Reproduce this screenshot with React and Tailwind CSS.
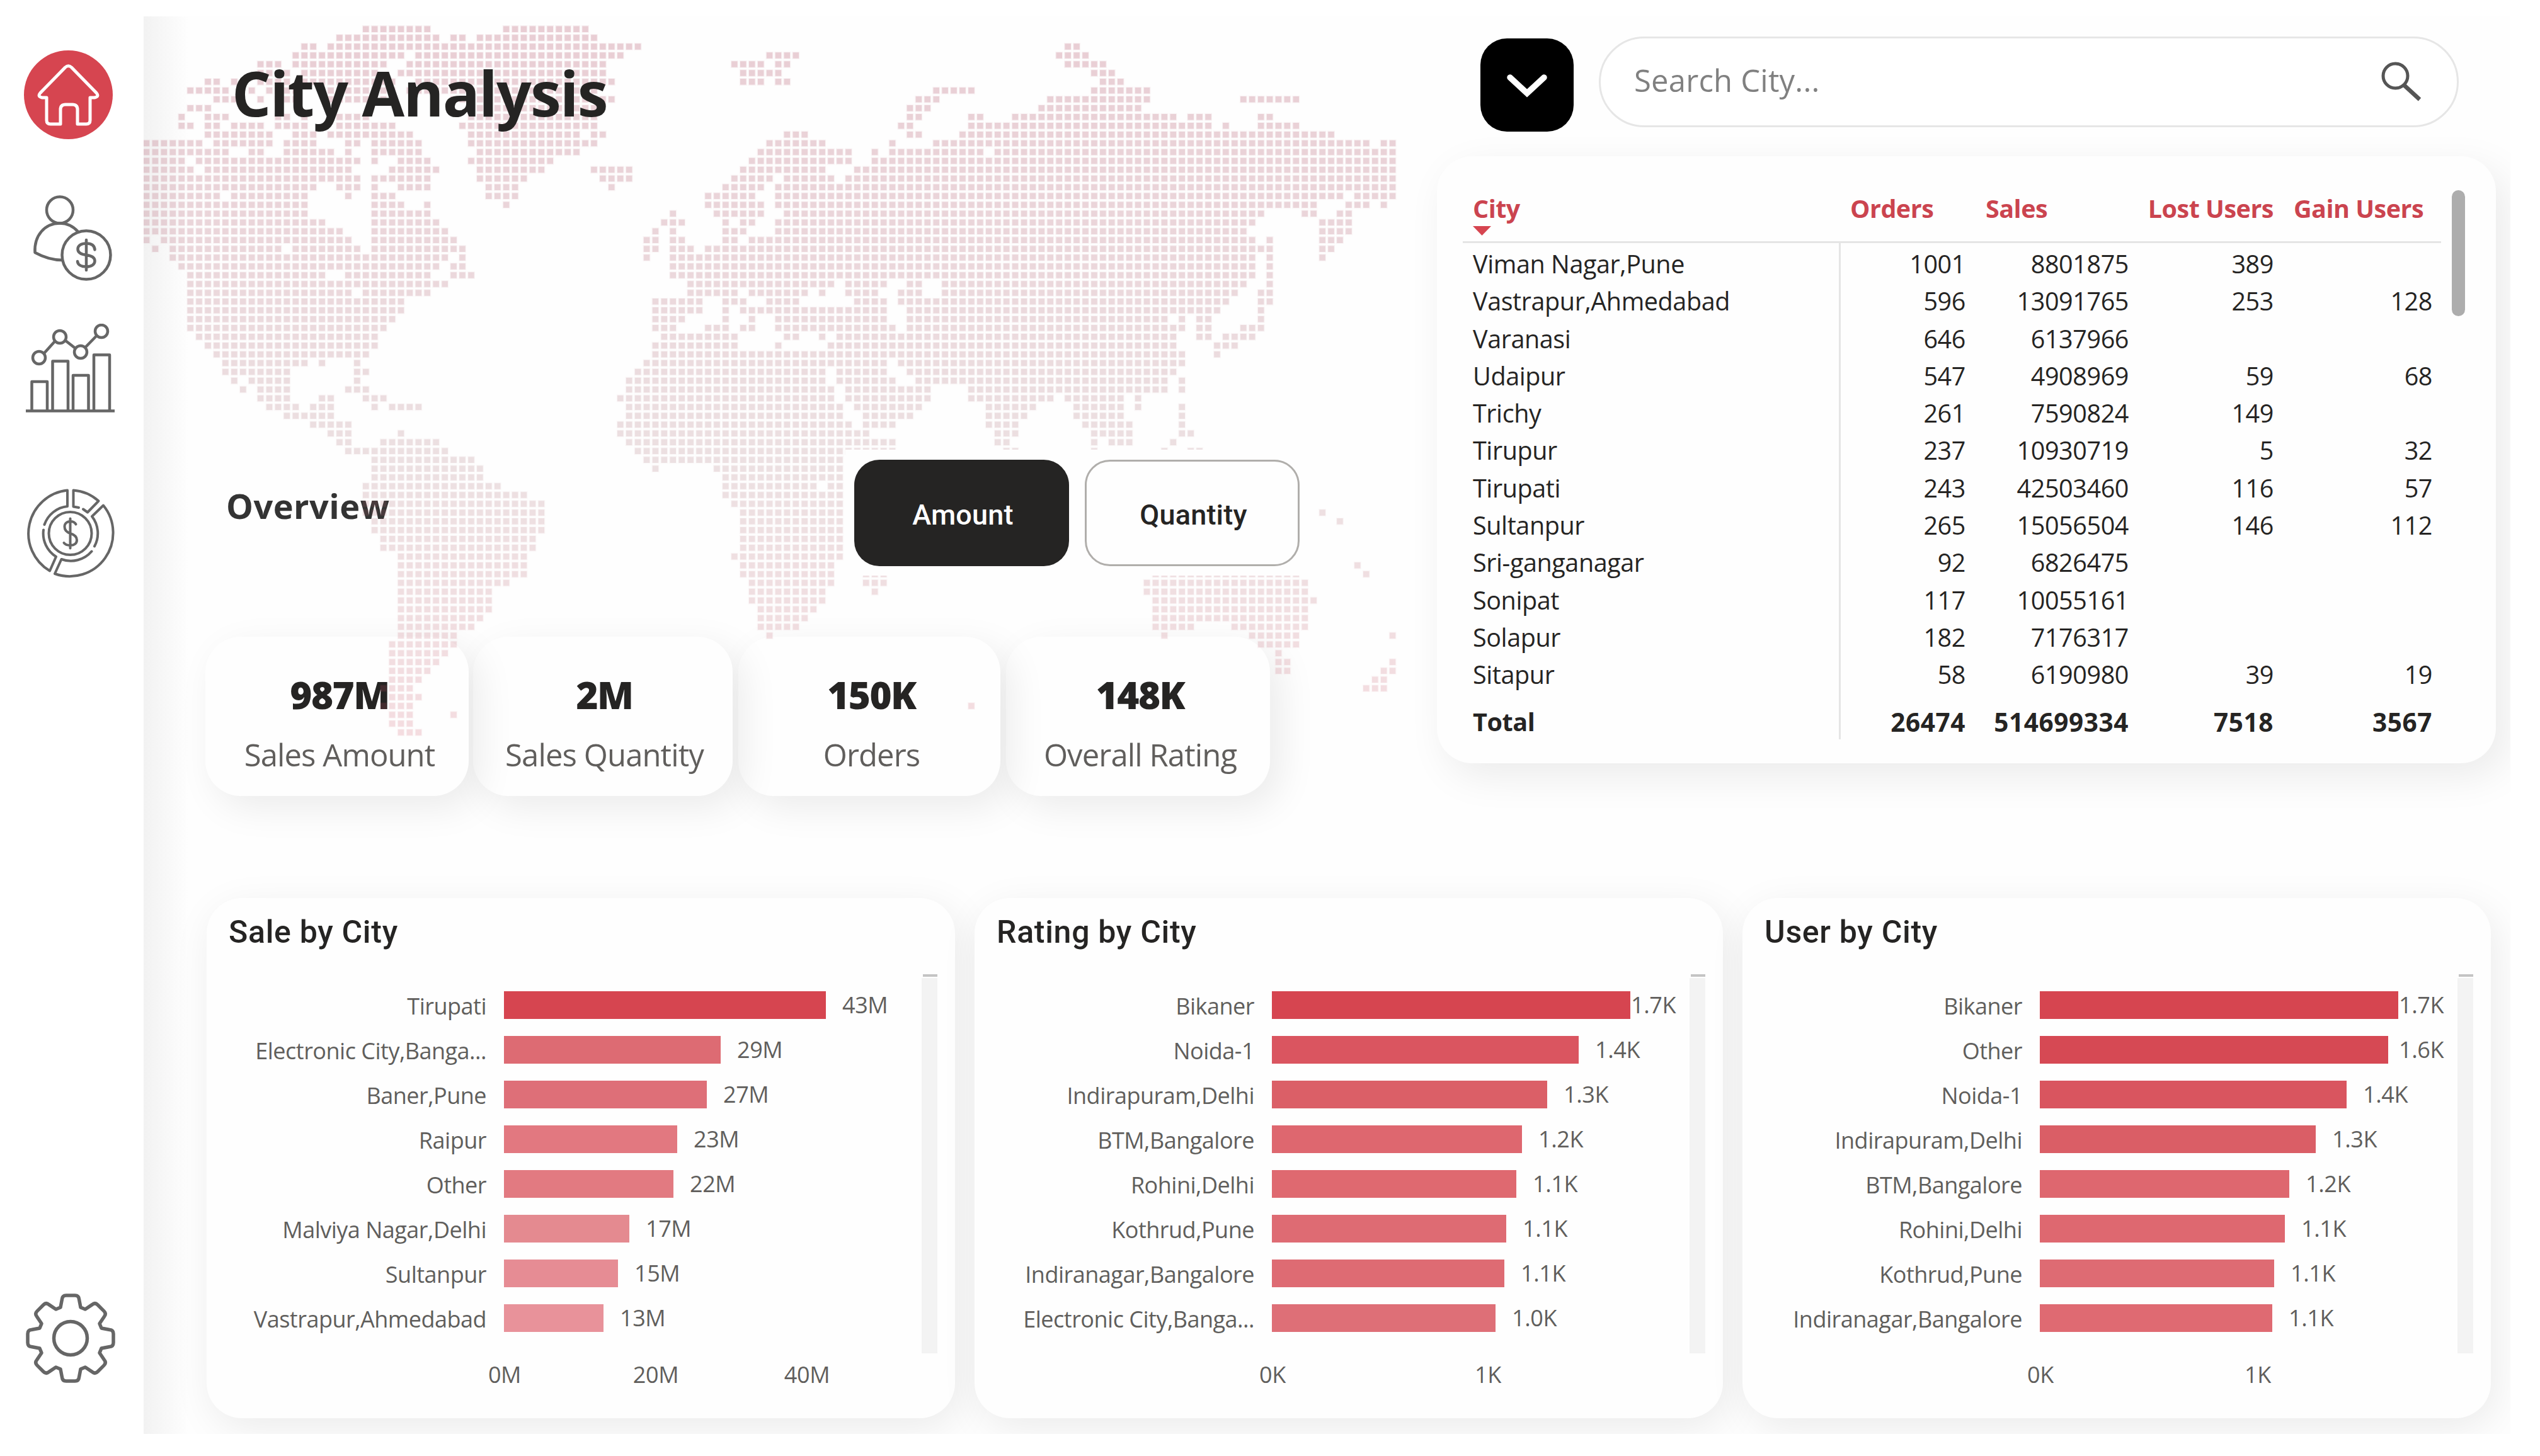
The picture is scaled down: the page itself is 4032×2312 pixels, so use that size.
import React from "react";

const SEGOE = "font-['Open_Sans','Noto_Sans',sans-serif]";

/* World map dots: one string per row, each a list of filled column ranges. */
const MAP_ROWS = [
  "25-32,41-50",
  "22-33,35-36,38-51",
  "18-19,21-56,105-106",
  "17-29,31-54,71-74,104-107",
  "13-15,17-27,30-52,67-70,72-73,105-109",
  "13-14,16,18-26,29-52,68-72,108-110",
  "7-8,10,13-16,18-28,31-53,68-70,72-73,109-111",
  "5-9,12,14-17,20-28,30-51,90-94,108-114",
  "8-10,13,15-17,21-28,35-53,88-90,103-114,125-131",
  "5-7,37-51,87-89,102-113",
  "4,7-9,15-16,18,22-25,37-51,87-88,94-95,99-117,119-121,127-128",
  "4-5,7-8,10-13,15-18,22-28,36-51,86-87,94-121,123,127-131",
  "7-14,17-19,21-30,37-49,51-52,73-75,87-88,93-135",
  "0-6,8-14,16-19,23-24,26-31,37-51,71-77,85,90-139,141-142",
  "0-9,12-13,16-21,23,26-31,38-49,70-80,83,85-95,97-142",
  "0-4,6-24,26,29-32,37-46,69-80,83-142",
  "0-5,7-23,28-33,38-45,51-55,68-77,81-142",
  "0-24,26-32,38-43,52-55,67-71,73-78,80-142",
  "0-19,22-24,26,29-32,39-42,53,66-70,72-142",
  "0-8,10-18,23,26-28,39-42,64-69,72-136,138-142",
  "0-18,26-29,32,41,64-70,72-133,137-139,141",
  "0-18,26-32,60,65-70,73-127,132-133,136-137",
  "0-20,26-33,59-61,66,68-69,72-126,134-137",
  "0-22,26-34,58,60,66-68,72-125,134-137",
  "0,2-23,26-35,57-58,60-61,66-67,69-126,128,134-136",
  "1,3-15,17-24,26-36,57-58,60-62,64-128,134-135",
  "3-34,36,57,60-126,128,134",
  "4-33,35-36,60-126,128",
  "5-20,23-32,35-37,60-126,128",
  "5-34,62-78,80-84,87-88,91-125,128",
  "5-23,25-32,62-67,69-75,77,80-83,86-88,91-124,127-128",
  "5-29,58-63,66-68,71-74,81-84,86-123,127-128",
  "5-29,58-63,66,68-84,87-122,127",
  "5-28,58-61,66,69,72-84,87-116,118,120-121,127",
  "5-27,58-60,64-66,68-69,72-85,87-118,120-121,125-127",
  "6-26,59-67,73-74,77,79-117,120-121,123-126",
  "7-26,58-67,72,78-117,122-124",
  "8-25,58-118,122",
  "9-18,20,24,57-84,86-118",
  "9-16,24-25,56-77,79-84,87-117",
  "10,12-16,24,55-77,79-85,88-116,118",
  "11,13-16,23-25,55-78,80-89,94-116,118",
  "13-16,20-21,25-27,54-78,80-89,94-103,105-111,113",
  "14-17,19-21,26,28-31,55-79,81-88,96-101,106-111,113,118",
  "16-21,55-79,82-87,96-100,106-111,118",
  "19-23,54-80,82-85,96-99,107-112,118",
  "21-23,29,54-82,97-99,108-112,118-119",
  "22-23,27-33,55-85,97-98,108,110-112,117",
  "23-34,56-85,98-99,108,116,119-120",
  "26-37,57-79",
  "26-38,58,65-79",
  "26-38,66-79",
  "25-40,66-76,78-79",
  "25-43,66-79",
  "25-45,67-79",
  "25-45,68-79,134",
  "26-45,68-79,136",
  "26-45,68-79",
  "27-44,68-79",
  "27-44,68-79",
  "29-43,67-79",
  "29-43,68-78,138",
  "29-43,68-78,82-84,115-131,139",
  "29-41,69-78,82-84,114-132",
  "29-39,69-77,83,114-132",
  "29-39,69-77,115-133",
  "29-39,70-76,115-132",
  "29-38,70-75,115-132",
  "29-37,70-74,115-119,124-132",
  "29-35,71,116,126-131,142",
  "28-35,127-131",
  "28-34,129",
  "28-33,129-130,142",
  "28-32,129-130,141-142",
  "28-31,140-141",
  "27-30,139-141",
  "28-31",
  "27-30,94",
  "28-30,35",
  "28-30",
  "29-31",
];

const PITCH_X = 13.93;
const PITCH_Y = 13.96;

function mapPath(size) {
  let d = "";
  MAP_ROWS.forEach((row, r) => {
    row.split(",").forEach((part) => {
      const [a, b] = part.split("-").map(Number);
      for (let c = a; c <= (b ?? a); c++) {
        const x = (4.5 + c * PITCH_X - size / 2).toFixed(1);
        const y = (20.1 + r * PITCH_Y - size / 2).toFixed(1);
        d += `M${x} ${y}h${size}v${size}h${-size}z`;
      }
    });
  });
  return d;
}
const HALO = mapPath(12);
const CORE = mapPath(9.5);

function WorldMap() {
  return (
    <svg className="pointer-events-none absolute left-0 top-0 z-10" width="2000" height="1160" viewBox="0 0 2000 1160" aria-hidden="true">
      <defs>
        <linearGradient id="mapTint" gradientUnits="userSpaceOnUse" x1="0" y1="0" x2="0" y2="1150">
          <stop offset="0" stopColor="#b04a62" stopOpacity="0.22" />
          <stop offset="0.3" stopColor="#a84a5e" stopOpacity="0.18" />
          <stop offset="0.62" stopColor="#a06068" stopOpacity="0.15" />
          <stop offset="1" stopColor="#cc4c60" stopOpacity="0.15" />
        </linearGradient>
      </defs>
      <path d={HALO} fill="url(#mapTint)" opacity="0.3" />
      <path d={CORE} fill="url(#mapTint)" />
    </svg>
  );
}

function HomeIcon() {
  return (
    <svg width="141" height="141" viewBox="0 0 141 141">
      <circle cx="70.5" cy="70.5" r="70.5" fill="#d64550" />
      <path
        d="M36 75h-7q-8-1.500-3-7.500L65.500 27q5-4.500 10 0L115 67.500q5 6-3 7.500h-7V111q0 6-6 6H85V94q0-8-8-8H66q-8 0-8 8V117H42q-6 0-6-6Z"
        fill="none"
        stroke="#fff"
        strokeWidth="5"
        strokeLinejoin="round"
      />
    </svg>
  );
}

function UserMoneyIcon() {
  return (
    <svg width="141" height="141" viewBox="45 305 141 141" fill="none" stroke="#666" strokeWidth="4.5" strokeLinecap="round" strokeLinejoin="round">
      <circle cx="95" cy="333.500" r="21" />
      <path d="M124 368C116 359 106 354.500 95 354.500C71 354.500 54 374 55.500 401C70 409 84 413 99 413" />
      <circle cx="137" cy="405" r="38.500" />
      <path d="M137 381V429M150.500 396.500C150 389.500 144.500 386.500 137 386.500C129 386.500 123.500 390 123.500 395.500C123.500 401 129 404 137 405C145.500 406 150.500 409 150.500 414.500C150.500 420 145 423.500 137 423.500C129 423.500 123.500 420.500 123 415" />
    </svg>
  );
}

function ChartIcon() {
  return (
    <svg width="141" height="141" viewBox="41 514 141 141" fill="none" stroke="#666" strokeWidth="4.5" strokeLinejoin="round">
      <path d="M41 652.500H182" />
      <path d="M50.500 652V606H75V652M83.500 652V573.500H108V652M116 652V596H140.500V652M149 652V563.500H174V652" />
      <path d="M69.500 561.500L87.500 541.500M103.500 540.500L119.500 553M135.500 551.500L153.500 533" />
      <circle cx="62" cy="568" r="10" />
      <circle cx="95" cy="535" r="10" />
      <circle cx="128" cy="559" r="10" />
      <circle cx="161" cy="526" r="10" />
    </svg>
  );
}

function DonutIcon() {
  return (
    <svg width="141" height="145" viewBox="41 775.500 141 145" fill="none" stroke="#666" strokeWidth="4" strokeLinecap="round" strokeLinejoin="round">
      <circle cx="111.500" cy="847.500" r="34" />
      <path d="M70.500 833.500A43.500 43.500 0 0 1 107 804.500V779A69 69 0 0 0 79 907L89 884.500A43.500 43.500 0 0 1 69 842" />
      <path d="M125 806.500L116.500 805V779A69 69 0 0 1 156.500 796L139 814L132 809" />
      <path d="M150 868A43.500 43.500 0 0 0 146 820.500L164 803A69 69 0 0 1 87 911.500L97.500 888.500A43.500 43.500 0 0 0 145.500 876" />
      <path d="M111.500 824V871M120.500 833C119 830 116 828.500 111.500 828.500C106 828.500 102.500 832 102.500 837C102.500 842.500 106 845.500 111.500 847.500C118 849.500 122 852.500 122 858C122 863.500 118 866.500 112 866.500C107.500 866.500 103.500 865.500 101.500 862.500" />
    </svg>
  );
}

function gearPath() {
  const pts = [];
  for (let k = 0; k < 8; k++) {
    const a = (k * Math.PI) / 4;
    const at = (u, v) => [
      (72 + v * Math.sin(a) + u * Math.cos(a)).toFixed(1),
      (72 - v * Math.cos(a) + u * Math.sin(a)).toFixed(1),
    ].join(" ");
    pts.push(
      `${k ? "L" : "M"}${at(-16, 49)}L${at(-13.5, 62)}Q${at(-13, 68)} ${at(-7, 68)}L${at(7, 68)}Q${at(13, 68)} ${at(13.5, 62)}L${at(16, 49)}`
    );
  }
  return pts.join("") + "Z";
}
const GEAR = gearPath();

function GearIcon() {
  return (
    <svg width="144" height="144" viewBox="0 0 144 144" fill="none" stroke="#666" strokeWidth="5.500" strokeLinejoin="round">
      <path d={GEAR} />
      <circle cx="72" cy="72" r="26.500" />
    </svg>
  );
}

function Sidebar() {
  return (
    <nav className="flex h-[2312px] w-[228px] shrink-0 flex-col bg-white">
      <div className="ml-[38px] mt-[80px]"><HomeIcon /></div>
      <div className="ml-[45px] mt-[84px]"><UserMoneyIcon /></div>
      <div className="ml-[41px] mt-[68px]"><ChartIcon /></div>
      <div className="ml-[41px] mt-[120px]"><DonutIcon /></div>
      <div className="mb-[115px] ml-[40px] mt-auto"><GearIcon /></div>
    </nav>
  );
}

const KPIS = [
  { value: "987M", label: "Sales Amount", box: "z-[4] ml-[98px] w-[418px] pl-[8px]" },
  { value: "2M", label: "Sales Quantity", box: "z-[3] ml-[7px] w-[412px] pl-[5px]" },
  { value: "150K", label: "Orders", box: "z-[2] ml-[9px] w-[416px] pl-[7px]" },
  { value: "148K", label: "Overall Rating", box: "z-[1] ml-[9px] w-[419px] pl-[7px]" },
];

function Kpi({ value, label, box }) {
  return (
    <div className={`relative flex h-[253px] shrink-0 flex-col items-center rounded-[56px] bg-[#fefefe] pt-[62px] shadow-[16px_18px_60px_rgba(0,0,0,0.08)] ${box}`}>
      <div className="whitespace-nowrap text-[60px] font-extrabold leading-[60px] tracking-[-1.5px] text-[#252423]">{value}</div>
      <div className="mt-[40px] whitespace-nowrap text-[49px] leading-[50px] tracking-[-0.9px] text-[#605e5c]">{label}</div>
    </div>
  );
}

function Overview() {
  return (
    <section className="flex h-[1400px] w-[2053px] shrink-0 flex-col">
      <h1 className="relative z-20 ml-[140px] mt-[71px] h-[100px] whitespace-nowrap text-[98px] font-bold leading-[100px] tracking-[-1.9px] text-[#252423]">
        City Analysis
      </h1>
      <div className="mt-[517px] flex h-[200px]">
        <h2 className="flex w-[1114px] items-center pb-[22px] pl-[131px] text-[54px] font-bold leading-[60px] tracking-[0.5px] text-[#333]">
          Overview
        </h2>
        <div className="relative z-20 flex h-[200px] w-[740px] items-center gap-[25px] bg-[#fefefe] pl-[14px] font-['Roboto',sans-serif] text-[45px] font-medium tracking-[0.2px]">
          <button className="h-[169px] w-[341px] rounded-[40px] bg-[#252423] pl-[4px] pt-[7px] text-white">Amount</button>
          <button className="h-[169px] w-[341px] rounded-[40px] border-[3px] border-[#b0aeab] bg-[#fefefe] pl-[4px] pt-[7px] text-[#252423]">Quantity</button>
        </div>
      </div>
      <div className="isolate mt-[97px] flex">
        {KPIS.map((k) => <Kpi key={k.value} {...k} />)}
      </div>
    </section>
  );
}

const CITIES = [
  ["Viman Nagar,Pune", "1001", "8801875", "389", ""],
  ["Vastrapur,Ahmedabad", "596", "13091765", "253", "128"],
  ["Varanasi", "646", "6137966", "", ""],
  ["Udaipur", "547", "4908969", "59", "68"],
  ["Trichy", "261", "7590824", "149", ""],
  ["Tirupur", "237", "10930719", "5", "32"],
  ["Tirupati", "243", "42503460", "116", "57"],
  ["Sultanpur", "265", "15056504", "146", "112"],
  ["Sri-ganganagar", "92", "6826475", "", ""],
  ["Sonipat", "117", "10055161", "", ""],
  ["Solapur", "182", "7176317", "", ""],
  ["Sitapur", "58", "6190980", "39", "19"],
];
const GRID = "grid grid-cols-[198px_259px_230px_252px] text-right";

function CityTable() {
  return (
    <div className="mt-[39px] flex h-[964px] w-[1681px] rounded-[56px] bg-[#fefefe] pl-[41px] shadow-[16px_20px_64px_rgba(0,0,0,0.08)]">
      <div className="w-[1553px] text-[39.500px] tracking-[-0.4px] text-[#252423]">
        <div className="flex h-[138px] border-b-[3px] border-[#e5e5e5] pt-[58px] text-[39.500px] font-bold leading-[50px] tracking-[-0.5px] text-[#cb444f]">
          <div className="w-[600px] pl-[16px]">
            <div className="h-[50px]">City</div>
            <svg className="mt-[3px]" width="29" height="15" viewBox="0 0 29 15"><path d="M0 0H29L14.500 15Z" fill="#d64550" /></svg>
          </div>
          <div className="w-[198px] pl-[15px]">Orders</div>
          <div className="w-[259px] pl-[32px]">Sales</div>
          <div className="w-[230px] text-right">Lost Users</div>
          <div className="w-[252px] whitespace-nowrap pl-[32px]">Gain Users</div>
        </div>
        <div className="flex h-[788px]">
          <div className="w-[600px] border-r-[3px] border-[#e5e5e5] pl-[16px] pt-[4px]">
            {CITIES.map(([city]) => <div key={city} className="h-[59.300px] leading-[59.300px]">{city}</div>)}
            <div className="mt-[15px] font-bold leading-[59px]">Total</div>
          </div>
          <div className="pt-[4px]">
            {CITIES.map(([city, ...cells]) => (
              <div key={city} className={`${GRID} h-[59.300px] leading-[59.300px]`}>
                {cells.map((c, i) => <div key={i}>{c}</div>)}
              </div>
            ))}
            <div className={`${GRID} mt-[15px] text-[40.500px] font-bold leading-[59px] tracking-[0.6px]`}>
              {["26474", "514699334", "7518", "3567"].map((c) => <div key={c}>{c}</div>)}
            </div>
          </div>
        </div>
      </div>
      <div className="ml-[17px] mt-[54px] h-[200px] w-[21px] rounded-full bg-[#adadad]" />
    </div>
  );
}

function SearchAndTable() {
  return (
    <section className="flex flex-col pt-[32px]">
      <div className="flex h-[151px] items-start pl-[69px]">
        <button className="mt-[3px] flex h-[148px] w-[148px] items-center justify-center rounded-[42px] bg-black">
          <svg className="mt-[4px]" width="72" height="48" viewBox="0 0 72 48" fill="none">
            <path d="M9 10L36 35L63 10" stroke="#fff" strokeWidth="9.500" strokeLinecap="round" />
          </svg>
        </button>
        <div className="ml-[40px] flex h-[144px] w-[1365px] items-center justify-between rounded-full border-[3px] border-[#e6e6e6] bg-white pb-[4px] pl-[53px] pr-[55px]">
          <span className="text-[49px] tracking-[0.2px] text-[#808080]">Search City...</span>
          <svg className="mt-[2px]" width="66" height="64" viewBox="0 0 66 64" fill="none" stroke="#555" strokeWidth="5">
            <circle cx="23.500" cy="23.500" r="19.500" />
            <path d="M37 38L62 61" strokeWidth="6.500" />
          </svg>
        </div>
      </div>
      <CityTable />
    </section>
  );
}

const CHARTS = [
  {
    title: "Sale by City",
    bars: [
      ["Tirupati", 511, "43M", "#d64550", 26],
      ["Electronic City,Banga...", 344, "29M", "#dd6b73", 26],
      ["Baner,Pune", 322, "27M", "#de6f78", 26],
      ["Raipur", 275, "23M", "#e27880", 26],
      ["Other", 269, "22M", "#e27a81", 26],
      ["Malviya Nagar,Delhi", 199, "17M", "#e48a90", 26],
      ["Sultanpur", 181, "15M", "#e68c94", 26],
      ["Vastrapur,Ahmedabad", 158, "13M", "#e8929a", 26],
    ],
    axis: ["0M", "20M", "40M"],
    axisGap: "gap-[140px]",
  },
  {
    title: "Rating by City",
    bars: [
      ["Bikaner", 569, "1.7K", "#d64550", 1],
      ["Noida-1", 487, "1.4K", "#da5560", 26],
      ["Indirapuram,Delhi", 437, "1.3K", "#db5f67", 26],
      ["BTM,Bangalore", 397, "1.2K", "#de676f", 26],
      ["Rohini,Delhi", 388, "1.1K", "#df6970", 26],
      ["Kothrud,Pune", 372, "1.1K", "#de6b73", 26],
      ["Indiranagar,Bangalore", 369, "1.1K", "#de6b73", 26],
      ["Electronic City,Banga...", 355, "1.0K", "#de6f77", 26],
    ],
    axis: ["0K", "1K"],
    axisGap: "gap-[242px]",
  },
  {
    title: "User by City",
    bars: [
      ["Bikaner", 569, "1.7K", "#d64550", 1],
      ["Other", 553, "1.6K", "#d64954", 17],
      ["Noida-1", 487, "1.4K", "#d9555f", 26],
      ["Indirapuram,Delhi", 438, "1.3K", "#da5e66", 26],
      ["BTM,Bangalore", 396, "1.2K", "#de676f", 26],
      ["Rohini,Delhi", 389, "1.1K", "#de6870", 26],
      ["Kothrud,Pune", 372, "1.1K", "#de6b73", 26],
      ["Indiranagar,Bangalore", 369, "1.1K", "#df6a72", 26],
    ],
    axis: ["0K", "1K"],
    axisGap: "gap-[245px]",
  },
];

function ChartCard({ title, bars, axis, axisGap }) {
  return (
    <section className="flex h-[826px] w-[1188px] shrink-0 flex-col rounded-[56px] bg-[#fefefe] pt-[24px] text-[36px] text-[#605e5c] shadow-[8px_16px_64px_rgba(0,0,0,0.08)]">
      <h3 className="h-[60px] pl-[35px] font-['Roboto',sans-serif] text-[50px] font-medium leading-[60px] tracking-[0.7px] text-[#252423]">{title}</h3>
      <div className="mt-[37px] flex h-[602px]">
        <div className="w-[1135px] pt-[13.500px]">
          {bars.map(([label, width, value, color, offset]) => (
            <div key={label} className="flex h-[71.070px] items-center whitespace-nowrap">
              <div className="mr-[28px] w-[444px] pt-[4px] text-right tracking-[-0.5px]">{label}</div>
              <div className="h-[44px]" style={{ width, backgroundColor: color }} />
              <div className="tracking-[-0.4px]" style={{ marginLeft: offset }}>{value}</div>
            </div>
          ))}
        </div>
        <div className="w-[25px]">
          <div className="ml-[2px] h-[4px] bg-[#c4c4c4]" />
          <div className="mt-[2px] h-[596px] bg-[#f3f3f3]" />
        </div>
      </div>
      <div className={`mt-[9px] flex pl-[423px] leading-[50px] tracking-[-0.4px] ${axisGap}`}>
        {axis.map((a) => <div key={a} className="w-[100px] text-center">{a}</div>)}
      </div>
    </section>
  );
}

export default function App() {
  return (
    <div className={`flex h-[2312px] w-[4032px] overflow-hidden bg-white ${SEGOE}`}>
      <Sidebar />
      <main className="relative mt-[26px] h-[2251px] w-[3757px] shrink-0 overflow-hidden bg-linear-to-r from-[#f2f2f2] to-[#fefefe] to-[72px]">
        <WorldMap />
        <div className="flex">
          <Overview />
          <SearchAndTable />
        </div>
        <div className="flex gap-[31px] pl-[100px]">
          {CHARTS.map((c) => <ChartCard key={c.title} {...c} />)}
        </div>
      </main>
    </div>
  );
}
